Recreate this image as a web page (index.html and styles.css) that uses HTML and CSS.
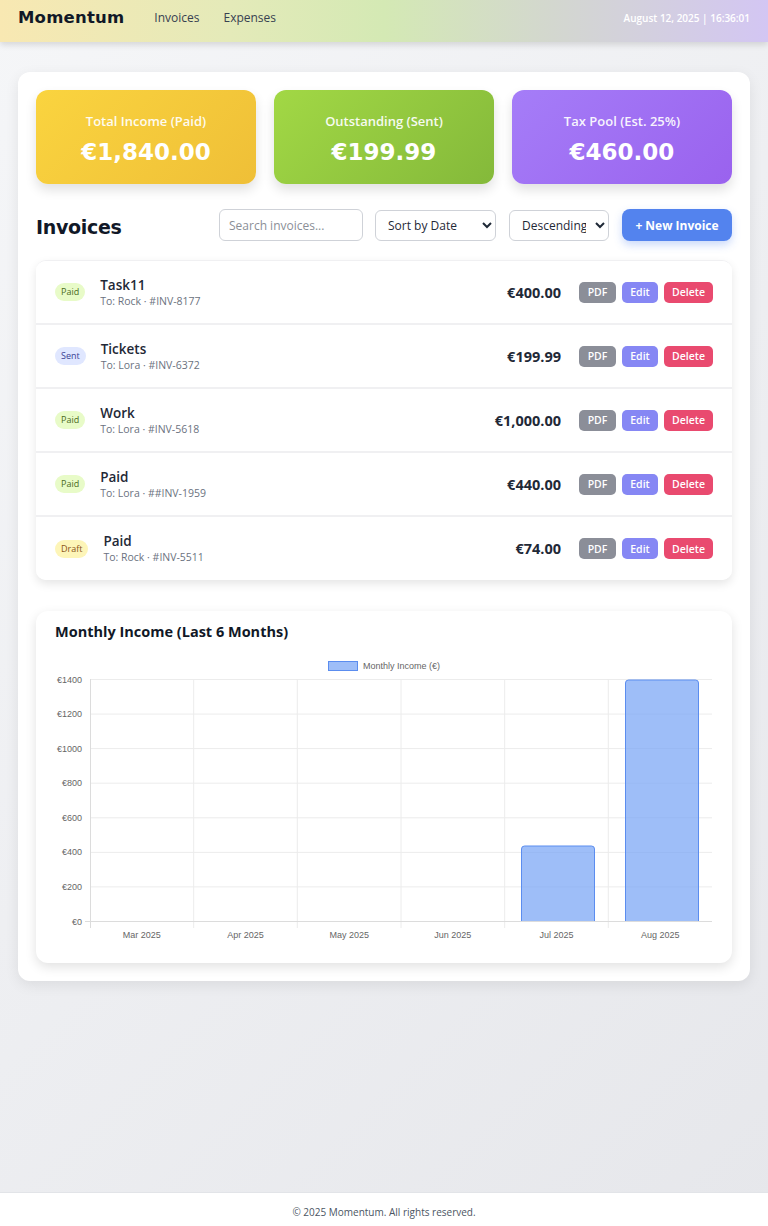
FILE: index.html
```html
<!DOCTYPE html>
<html lang="en">
<head>
<meta charset="utf-8">
<title>Momentum</title>
<link rel="stylesheet" href="styles.css">
</head>
<body>
<header class="topbar">
  <div class="brand">Momentum</div>
  <nav class="nav">
    <a href="#">Invoices</a>
    <a href="#">Expenses</a>
  </nav>
  <div class="clock">August 12, 2025 | 16:36:01</div>
</header>

<main class="main">
  <section class="panel">
    <div class="stats">
      <div class="stat stat-yellow">
        <div class="stat-label">Total Income (Paid)</div>
        <div class="stat-value">€1,840.00</div>
      </div>
      <div class="stat stat-green">
        <div class="stat-label">Outstanding (Sent)</div>
        <div class="stat-value">€199.99</div>
      </div>
      <div class="stat stat-purple">
        <div class="stat-label">Tax Pool (Est. 25%)</div>
        <div class="stat-value">€460.00</div>
      </div>
    </div>

    <div class="toolbar">
      <h2 class="section-title">Invoices</h2>
      <div class="controls">
        <input class="search" type="text" placeholder="Search invoices...">
        <select class="select sort"><option>Sort by Date</option></select>
        <select class="select order"><option>Descending</option></select>
        <button class="btn-new">+ New Invoice</button>
      </div>
    </div>

    <div class="list">
      <div class="row">
        <span class="badge paid">Paid</span>
        <div class="info"><div class="title">Task11</div><div class="sub">To: Rock · #INV-8177</div></div>
        <div class="amount">€400.00</div>
        <div class="actions"><button class="b pdf">PDF</button><button class="b edit">Edit</button><button class="b del">Delete</button></div>
      </div>
      <div class="row">
        <span class="badge sent">Sent</span>
        <div class="info"><div class="title">Tickets</div><div class="sub">To: Lora · #INV-6372</div></div>
        <div class="amount">€199.99</div>
        <div class="actions"><button class="b pdf">PDF</button><button class="b edit">Edit</button><button class="b del">Delete</button></div>
      </div>
      <div class="row">
        <span class="badge paid">Paid</span>
        <div class="info"><div class="title">Work</div><div class="sub">To: Lora · #INV-5618</div></div>
        <div class="amount">€1,000.00</div>
        <div class="actions"><button class="b pdf">PDF</button><button class="b edit">Edit</button><button class="b del">Delete</button></div>
      </div>
      <div class="row">
        <span class="badge paid">Paid</span>
        <div class="info"><div class="title">Paid</div><div class="sub">To: Lora · ##INV-1959</div></div>
        <div class="amount">€440.00</div>
        <div class="actions"><button class="b pdf">PDF</button><button class="b edit">Edit</button><button class="b del">Delete</button></div>
      </div>
      <div class="row">
        <span class="badge draft">Draft</span>
        <div class="info"><div class="title">Paid</div><div class="sub">To: Rock · #INV-5511</div></div>
        <div class="amount">€74.00</div>
        <div class="actions"><button class="b pdf">PDF</button><button class="b edit">Edit</button><button class="b del">Delete</button></div>
      </div>
    </div>

    <div class="chart-card">
      <h3 class="chart-title">Monthly Income (Last 6 Months)</h3>
      <svg class="chart" width="658" height="292" viewBox="0 0 658 292" xmlns="http://www.w3.org/2000/svg">
        <g stroke="#ececec" stroke-width="1">
          <line x1="35" y1="24.5" x2="657" y2="24.5"/>
          <line x1="35" y1="59.1" x2="657" y2="59.1"/>
          <line x1="35" y1="93.6" x2="657" y2="93.6"/>
          <line x1="35" y1="128.2" x2="657" y2="128.2"/>
          <line x1="35" y1="162.8" x2="657" y2="162.8"/>
          <line x1="35" y1="197.4" x2="657" y2="197.4"/>
          <line x1="35" y1="231.9" x2="657" y2="231.9"/>
          <line x1="138.7" y1="24" x2="138.7" y2="273"/>
          <line x1="242.3" y1="24" x2="242.3" y2="273"/>
          <line x1="346" y1="24" x2="346" y2="273"/>
          <line x1="449.7" y1="24" x2="449.7" y2="273"/>
          <line x1="553.3" y1="24" x2="553.3" y2="273"/>
        </g>
        <g stroke="#dcdcdc" stroke-width="1">
          <line x1="35.5" y1="24" x2="35.5" y2="273"/>
          <line x1="30" y1="266.5" x2="657" y2="266.5"/>
        </g>
        <path d="M466.5 266 V194 a3 3 0 0 1 3 -3 H536.5 a3 3 0 0 1 3 3 V266" fill="rgba(120,165,245,0.72)" stroke="#5b8def" stroke-width="1"/>
        <path d="M570.5 266 V28 a3 3 0 0 1 3 -3 H640.5 a3 3 0 0 1 3 3 V266" fill="rgba(120,165,245,0.72)" stroke="#5b8def" stroke-width="1"/>
        <rect x="273.5" y="6.5" width="29" height="9" fill="rgba(120,165,245,0.72)" stroke="#5b8def" stroke-width="1"/>
        <g font-family="Liberation Sans, Arial, sans-serif" font-size="9" fill="#666">
          <text x="308" y="14">Monthly Income (€)</text>
        </g>
        <g font-family="Liberation Sans, Arial, sans-serif" font-size="9" fill="#666" text-anchor="end">
          <text x="27" y="27.5">€1400</text>
          <text x="27" y="62">€1200</text>
          <text x="27" y="96.5">€1000</text>
          <text x="27" y="131">€800</text>
          <text x="27" y="165.5">€600</text>
          <text x="27" y="200">€400</text>
          <text x="27" y="235">€200</text>
          <text x="27" y="269.5">€0</text>
        </g>
        <g font-family="Liberation Sans, Arial, sans-serif" font-size="9" fill="#666" text-anchor="middle">
          <text x="86.8" y="283">Mar 2025</text>
          <text x="190.5" y="283">Apr 2025</text>
          <text x="294.2" y="283">May 2025</text>
          <text x="397.8" y="283">Jun 2025</text>
          <text x="501.5" y="283">Jul 2025</text>
          <text x="605.2" y="283">Aug 2025</text>
        </g>
      </svg>
    </div>
  </section>
</main>

<footer class="footer">© 2025 Momentum. All rights reserved.</footer>
</body>
</html>
```

FILE: styles.css
```css
* { box-sizing: border-box; }
html, body { margin: 0; padding: 0; }
body {
  min-height: 100vh;
  display: flex;
  flex-direction: column;
  font-family: "Open Sans", "Noto Sans", sans-serif;
  color: #1f2937;
  background: linear-gradient(135deg, #f5f6f8 0%, #e6e7eb 100%);
}

.topbar {
  height: 42px;
  display: flex;
  align-items: center;
  padding: 0 18px 7px;
  background: linear-gradient(90deg, #f8e8b2 0%, #e4eab9 30%, #d4e9b4 50%, #d3d7cf 72%, #d3c6f3 100%);
  box-shadow: 0 3px 6px rgba(0,0,0,0.12);
  position: relative;
  z-index: 2;
}
.brand {
  font-family: "DejaVu Sans", sans-serif;
  font-weight: 700;
  font-size: 16.5px;
  color: #111827;
  letter-spacing: 0.2px;
}
.nav { display: flex; gap: 24px; margin-left: 30px; }
.nav a {
  font-size: 12px;
  color: #374151;
  text-decoration: none;
  font-weight: 500;
}
.clock {
  margin-left: auto;
  color: #fff;
  font-size: 10px;
  font-weight: 600;
}

.main { flex: 1; padding: 30px 18px 40px; }
.panel {
  background: #fff;
  border-radius: 12px;
  padding: 18px;
  box-shadow: 0 4px 14px rgba(0,0,0,0.08);
}

.stats { display: grid; grid-template-columns: repeat(3, 1fr); gap: 18px; }
.stat {
  height: 94px;
  border-radius: 12px;
  display: flex;
  flex-direction: column;
  align-items: center;
  justify-content: center;
  color: #fff;
  box-shadow: 0 6px 12px rgba(0,0,0,0.12);
  padding-top: 2px;
}
.stat-yellow { background: linear-gradient(135deg, #fad43f 0%, #efbf37 100%); }
.stat-green { background: linear-gradient(135deg, #a2d845 0%, #84b93a 100%); }
.stat-purple { background: linear-gradient(135deg, #a57df8 0%, #9a62ee 100%); }
.stat-label { font-size: 13px; font-weight: 600; opacity: 0.92; }
.stat-value {
  font-family: "DejaVu Sans", sans-serif;
  font-weight: 700;
  font-size: 23px;
  margin-top: 9px;
}

.toolbar {
  display: flex;
  align-items: center;
  margin-top: 25px;
  height: 32px;
}
.section-title {
  margin: 0;
  font-family: "DejaVu Sans", sans-serif;
  font-weight: 700;
  font-size: 19px;
  color: #111827;
  letter-spacing: -0.3px;
  padding-top: 3px;
}
.controls { margin-left: auto; display: flex; align-items: center; gap: 12px; }
.search {
  width: 144px;
  height: 32px;
  border: 1px solid #cfd2d8;
  border-radius: 6px;
  padding: 0 9px;
  font-family: inherit;
  font-size: 12px;
  color: #374151;
}
.search::placeholder { color: #8b8f97; }
.select {
  height: 31px;
  border: 1px solid #cfd2d8;
  border-radius: 6px;
  background: #fff;
  font-family: inherit;
  font-size: 12px;
  color: #1f2937;
  padding: 0 6px 0 8px;
}
.sort { width: 121px; }
.order { width: 100px; margin-left: 1px; }
.btn-new {
  width: 110px;
  height: 32px;
  border: none;
  border-radius: 8px;
  background: #5383ee;
  color: #fff;
  font-family: inherit;
  font-weight: 700;
  font-size: 12px;
  box-shadow: 0 4px 8px rgba(83,131,238,0.3);
  margin-left: 1px;
}

.list {
  margin-top: 19px;
  border-radius: 10px;
  border-top: 1px solid #f0f0f2;
  box-shadow: 0 4px 10px rgba(0,0,0,0.1);
  overflow: hidden;
}
.row {
  height: 64px;
  display: flex;
  align-items: center;
  padding: 0 19px;
  border-bottom: 2px solid #f0f0f2;
  background: #fff;
}
.row:last-child { border-bottom: none; height: 63px; }
.badge {
  font-size: 9px;
  font-weight: 500;
  padding: 3px 6px;
  border-radius: 9px;
  line-height: 12px;
}
.paid { background: #e8fbc8; color: #4a6b1d; }
.sent { background: #e0e7ff; color: #3a3f93; }
.draft { background: #fdf5b8; color: #8a5418; }
.info { margin-left: 15px; }
.title { font-size: 13.5px; font-weight: 600; color: #1f2937; line-height: 17px; }
.sub { font-size: 10.5px; color: #6b7280; line-height: 14px; }
.amount {
  margin-left: auto;
  font-size: 14.5px;
  font-weight: 700;
  color: #1f2937;
}
.actions { display: flex; gap: 6px; margin-left: 18px; }
.b {
  height: 21px;
  border: none;
  border-radius: 5px;
  color: #fff;
  font-family: inherit;
  font-size: 10.5px;
  font-weight: 600;
  padding: 0 8px;
}
.pdf { background: #8b8e98; width: 37px; }
.edit { background: #8687f4; width: 36px; }
.del { background: #e94a6f; width: 49px; }

.chart-card {
  margin-top: 31px;
  border-radius: 12px;
  box-shadow: 0 4px 12px rgba(0,0,0,0.12);
  padding: 12px 19px 16px;
}
.chart-title {
  margin: 0;
  font-size: 14.5px;
  font-weight: 700;
  color: #111827;
  line-height: 18px;
}
.chart { display: block; margin-top: 14px; }

.footer {
  height: 34px;
  border-top: 1px solid #e2e4e8;
  background: #fff;
  display: flex;
  align-items: center;
  justify-content: center;
  font-size: 10px;
  color: #4b5563;
  padding-top: 4px;
}
```
